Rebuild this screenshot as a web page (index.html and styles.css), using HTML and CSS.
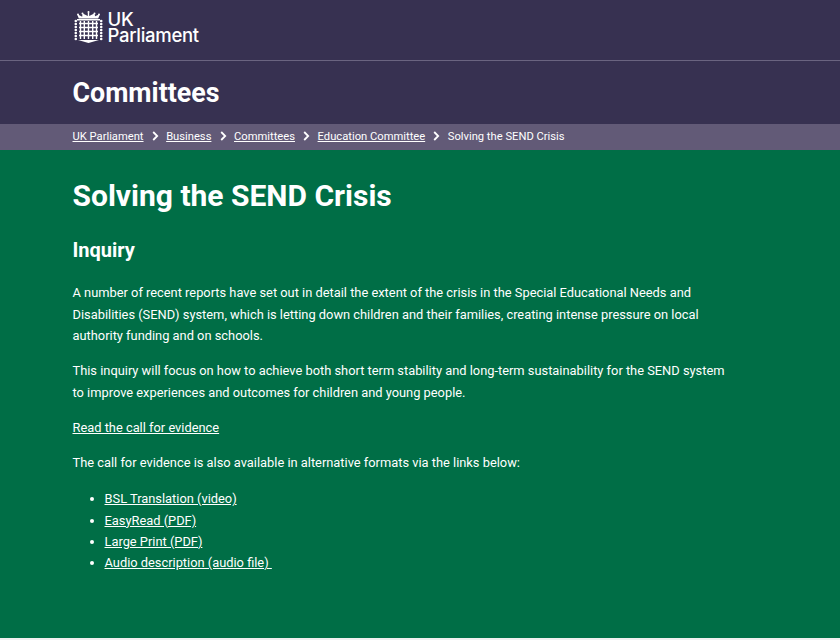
FILE: index.html
```html
<!DOCTYPE html>
<html lang="en">
<head>
<meta charset="utf-8">
<title>Solving the SEND Crisis</title>
<link rel="stylesheet" href="styles.css">
</head>
<body>
<header class="brand">
  <div class="wrap brand-row">
    <svg class="crest" width="29" height="32" viewBox="0 0 29 32" aria-hidden="true">
      <g fill="#fff">
        <circle cx="14.500" cy="1" r="1"/><circle cx="8.500" cy="2.500" r="1"/><circle cx="20.500" cy="2.500" r="1"/><circle cx="4" cy="3.500" r="1"/><circle cx="25" cy="3.500" r="1"/>
        <path d="M13.800 1.500h1.400v3.500l3-1.500 2.300-1 .6 2.700L25 3.500l.4 1-1.200 3.100H4.800L3.600 4.500l.4-1 4.200 2.200.3-3.200 2.300 1 3 1.500z"/>
        <rect x="3" y="8" width="23" height="1.500"/>
      </g>
      <g stroke="#fff" fill="none">
        <path stroke-width="1.400" d="M6.500 10v18M10.300 10v18M14.500 10v18M18.700 10v18M22.500 10v18"/>
        <path stroke-width="1.300" d="M5 12.500h19M5 16.500h19M5 20.500h19M5 24.500h19"/>
      </g>
      <g fill="#fff">
        <circle cx="1.800" cy="10" r="1.300"/><circle cx="1.800" cy="13" r="1.300"/><circle cx="1.800" cy="16" r="1.300"/><circle cx="1.800" cy="19" r="1.300"/><circle cx="1.800" cy="22" r="1.300"/><circle cx="1.800" cy="25" r="1.300"/><circle cx="1.800" cy="28" r="1.300"/>
        <circle cx="27.200" cy="10" r="1.300"/><circle cx="27.200" cy="13" r="1.300"/><circle cx="27.200" cy="16" r="1.300"/><circle cx="27.200" cy="19" r="1.300"/><circle cx="27.200" cy="22" r="1.300"/><circle cx="27.200" cy="25" r="1.300"/><circle cx="27.200" cy="28" r="1.300"/>
        <path d="M4 29h21l-10.500 3z"/>
      </g>
    </svg>
    <span class="wordmark">UK<br>Parliament</span>
  </div>
</header>
<div class="section-bar">
  <div class="wrap"><span class="section-title">Committees</span></div>
</div>
<nav class="crumbs">
  <div class="wrap crumb-row">
    <a href="#">UK Parliament</a>
    <svg class="chev" width="7" height="10" viewBox="0 0 7 10"><path d="M1.200 1l4 4-4 4" fill="none" stroke="#fff" stroke-width="1.800"/></svg>
    <a href="#">Business</a>
    <svg class="chev" width="7" height="10" viewBox="0 0 7 10"><path d="M1.200 1l4 4-4 4" fill="none" stroke="#fff" stroke-width="1.800"/></svg>
    <a href="#">Committees</a>
    <svg class="chev" width="7" height="10" viewBox="0 0 7 10"><path d="M1.200 1l4 4-4 4" fill="none" stroke="#fff" stroke-width="1.800"/></svg>
    <a href="#">Education Committee</a>
    <svg class="chev" width="7" height="10" viewBox="0 0 7 10"><path d="M1.200 1l4 4-4 4" fill="none" stroke="#fff" stroke-width="1.800"/></svg>
    <span>Solving the SEND Crisis</span>
  </div>
</nav>
<main class="content">
  <div class="wrap">
    <h1>Solving the SEND Crisis</h1>
    <h2>Inquiry</h2>
    <p>A number of recent reports have set out in detail the extent of the crisis in the Special Educational Needs and Disabilities (SEND) system, which is letting down children and their families, creating intense pressure on local authority funding and on schools.</p>
    <p>This inquiry will focus on how to achieve both short term stability and long-term sustainability for the SEND system to improve experiences and outcomes for children and young people.</p>
    <p><a href="#">Read the call for evidence</a></p>
    <p>The call for evidence is also available in alternative formats via the links below:</p>
    <ul>
      <li><a href="#">BSL Translation (video)</a></li>
      <li><a href="#">EasyRead (PDF)</a></li>
      <li><a href="#">Large Print (PDF)</a></li>
      <li><a href="#">Audio description (audio file)&nbsp;</a></li>
    </ul>
  </div>
</main>
</body>
</html>
```
FILE: styles.css
```css
* { box-sizing: border-box; }
html, body { margin: 0; padding: 0; }
body {
  height: 640px;
  overflow: hidden;
  display: flex;
  flex-direction: column;
  background: #f0f0f0;
  font-family: "Roboto", "Liberation Sans", sans-serif;
  color: #fff;
}
a { color: #fff; text-decoration: underline; }
.wrap { width: 660px; margin-left: 72.500px; }
.brand { background: #373151; height: 61px; border-bottom: 1px solid #6a6480; }
.brand-row { display: flex; align-items: center; height: 54px; gap: 5px; }
.crest { flex: none; margin-left: 1px; }
.wordmark { font-family: "Inter", sans-serif; font-size: 18.500px; line-height: 16px; font-weight: 500; letter-spacing: -0.300px; }
.section-bar { background: #373151; height: 63px; display: flex; align-items: center; }
.section-title { font-size: 26.800px; font-weight: 700; }
.crumbs { background: #625a77; height: 26px; padding-bottom: 2px; display: flex; align-items: center; font-size: 11.200px; }
.crumb-row { display: flex; align-items: center; gap: 6.300px; width: 700px; }
.chev { flex: none; margin: 0 1px 0 2px; }
.content { background: #006e46; height: 488px; flex: none; }
h1 { margin: 28px 0 0; font-size: 30px; line-height: 36px; font-weight: 700; }
h2 { margin: 22px 0 0; font-size: 20px; line-height: 28px; font-weight: 700; }
p { margin: 13.800px 0 0; font-size: 12.850px; line-height: 21.500px; }
h2 + p { margin-top: 18px; }
ul { margin: 14.500px 0 0; padding-left: 32px; font-size: 12.850px; line-height: 21.200px; }
```
